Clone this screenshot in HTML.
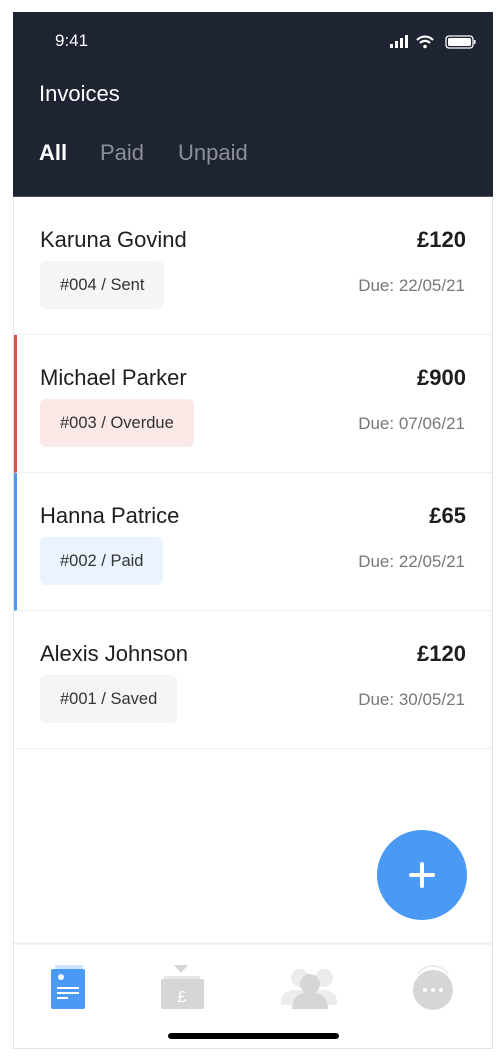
<!DOCTYPE html>
<html><head><meta charset="utf-8"><style>
*{margin:0;padding:0;box-sizing:border-box}
body{width:504px;height:1058px;background:#fff;font-family:"Liberation Sans",sans-serif;position:relative;overflow:hidden}
.frame{position:absolute;left:13px;top:12px;width:480px;height:1037px;border:1px solid #e2e2e2;border-top:none;background:#fff}
.hdr{position:absolute;left:13px;top:12px;width:480px;height:185px;background:#1f2433;border-bottom:1px solid #555}
.t{position:absolute;color:#fff}
.row{position:absolute;left:14px;width:478px;height:138px;border-bottom:1px solid #eee}
.name{position:absolute;left:26px;top:30px;font-size:22px;color:#1e1e1e}
.amt{position:absolute;right:26px;top:30px;font-size:22px;font-weight:bold;color:#1e1e1e}
.tag{position:absolute;left:26px;top:64px;height:48px;border-radius:6px;padding:0 20px;font-size:16.5px;line-height:48px;color:#333;background:#f5f5f5}
.due{position:absolute;right:27px;top:79px;font-size:17px;color:#777}
</style></head><body>
<div class="frame"></div>
<div class="hdr">
<div class="t" style="left:42px;top:19px;font-size:17px">9:41</div>
<svg style="position:absolute;left:375px;top:22px" width="100" height="16">
<rect x="2" y="10" width="3" height="4" fill="#fff"/><rect x="7" y="7" width="3" height="7" fill="#fff"/><rect x="12" y="4" width="3" height="10" fill="#fff"/><rect x="17" y="1" width="3" height="13" fill="#fff"/>
<path d="M29 6a11 11 0 0 1 16 0M32 9a7 7 0 0 1 10 0" stroke="#fff" stroke-width="2.2" fill="none"/><circle cx="37" cy="12.5" r="1.8" fill="#fff"/>
<rect x="58" y="2" width="27" height="12" rx="3" stroke="#fff" stroke-width="1.3" fill="none"/><rect x="60" y="4" width="23" height="8" rx="1.5" fill="#fff"/><rect x="86" y="6" width="1.5" height="4" fill="#fff"/>
</svg>
<div class="t" style="left:26px;top:69px;font-size:22px">Invoices</div>
<div class="t" style="left:26px;top:128px;font-size:22px;font-weight:bold">All</div>
<div class="t" style="left:87px;top:128px;font-size:22px;color:#8b8f99">Paid</div>
<div class="t" style="left:165px;top:128px;font-size:22px;color:#8b8f99">Unpaid</div>
</div>
<div class="row" style="top:197px"><div class="name">Karuna Govind</div><div class="amt">£120</div><div class="tag">#004 / Sent</div><div class="due">Due: 22/05/21</div></div>
<div class="row" style="top:335px;border-left:3px solid #d9534f"><div class="name" style="left:23px">Michael Parker</div><div class="amt">£900</div><div class="tag" style="left:23px;background:#fbe9e7">#003 / Overdue</div><div class="due">Due: 07/06/21</div></div>
<div class="row" style="top:473px;border-left:3px solid #4a9af5"><div class="name" style="left:23px">Hanna Patrice</div><div class="amt">£65</div><div class="tag" style="left:23px;background:#eaf3fe">#002 / Paid</div><div class="due">Due: 22/05/21</div></div>
<div class="row" style="top:611px"><div class="name">Alexis Johnson</div><div class="amt">£120</div><div class="tag">#001 / Saved</div><div class="due">Due: 30/05/21</div></div>
<div style="position:absolute;left:377px;top:830px;width:90px;height:90px;border-radius:50%;background:#4a9af5"></div>
<div style="position:absolute;left:409px;top:873px;width:26px;height:4px;background:#fff;border-radius:2px"></div>
<div style="position:absolute;left:420px;top:862px;width:4px;height:26px;background:#fff;border-radius:2px"></div>
<div style="position:absolute;left:14px;top:942px;width:478px;height:3px;background:#f2f2f2"></div>
<svg style="position:absolute;left:0;top:960px" width="504" height="60">
<rect x="55" y="5" width="28" height="4" fill="#cfe3fc"/>
<rect x="51" y="9" width="34" height="40" rx="2" fill="#4a9af5"/>
<circle cx="61" cy="17" r="3" fill="#fff"/><rect x="57" y="27" width="22" height="2" fill="#fff"/><rect x="57" y="32" width="22" height="2" fill="#fff"/><rect x="57" y="37" width="11" height="2" fill="#fff"/>
<path d="M174 5h14l-7 8z" fill="#d6d6d6"/><rect x="164" y="16" width="36" height="3" fill="#e6e6e6"/>
<rect x="161" y="19" width="43" height="30" rx="2" fill="#d6d6d6"/>
<text x="182" y="42" font-size="16" fill="#fff" text-anchor="middle" font-family="Liberation Sans">£</text>
<circle cx="300" cy="18" r="9" fill="#ececec"/><circle cx="324" cy="18" r="9" fill="#ececec"/>
<path d="M281 42q0-10 12-12h16q12 2 12 12v3h-40zM303 42q0-10 12-12h10q12 2 12 12v3h-34z" fill="#ececec"/>
<circle cx="310" cy="24" r="10" fill="#d6d6d6"/><path d="M292 49q0-14 12-16h12q12 2 12 16z" fill="#d6d6d6"/>
<circle cx="433" cy="30" r="20" fill="#d6d6d6"/><path d="M418 14a18 18 0 0 1 30 0" stroke="#ececec" stroke-width="2" fill="none"/>
<circle cx="425" cy="30" r="2" fill="#fff"/><circle cx="433" cy="30" r="2" fill="#fff"/><circle cx="441" cy="30" r="2" fill="#fff"/>
</svg>
<div style="position:absolute;left:168px;top:1033px;width:171px;height:6px;border-radius:3px;background:#000"></div>
</body></html>
